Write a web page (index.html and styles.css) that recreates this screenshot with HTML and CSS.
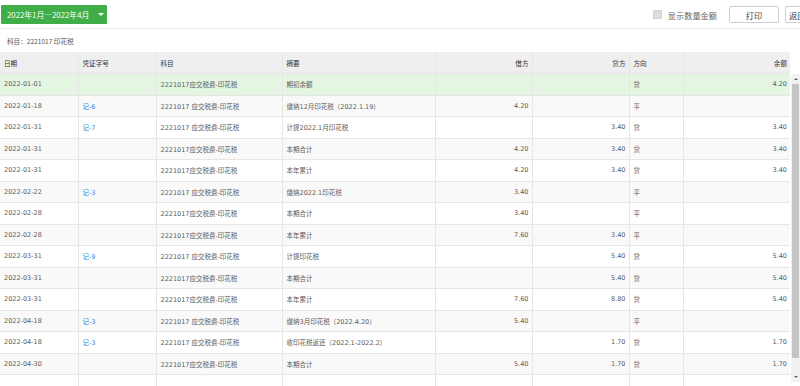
FILE: index.html
```html
<!DOCTYPE html>
<html lang="zh-CN">
<head>
    <meta charset="UTF-8">
    <title>明细账 - 印花税</title>
    <link rel="stylesheet" href="styles.css">
</head>
<body>
    <div id="toolbar">
        <div class="period-btn">2022年1月—2022年4月<span class="caret"></span></div>
        <div class="toolbar-right">
            <label class="check"><span class="check-box"></span>显示数量金额</label>
            <div class="btn">打印</div>
            <div class="btn btn-cut">返回</div>
        </div>
    </div>

    <div id="subject-line">科目：2221017 印花税</div>

    <div id="ledger">
        <table class="ledger-head">
            <colgroup>
                <col class="c-date"><col class="c-no"><col class="c-acct"><col class="c-memo">
                <col class="c-num"><col class="c-num"><col class="c-dir"><col class="c-bal">
            </colgroup>
            <tr>
                <th>日期</th>
                <th>凭证字号</th>
                <th>科目</th>
                <th>摘要</th>
                <th class="num">借方</th>
                <th class="num">贷方</th>
                <th>方向</th>
                <th class="num">余额</th>
            </tr>
        </table>

        <div class="ledger-body">
            <div class="body-scroll">
                <table class="ledger-rows">
                    <colgroup>
                        <col class="c-date"><col class="c-no"><col class="c-acct"><col class="c-memo">
                        <col class="c-num"><col class="c-num"><col class="c-dir"><col class="c-bal">
                    </colgroup>
                    <tr class="opening">
                        <td>2022-01-01</td><td></td><td>2221017应交税费-印花税</td><td>期初余额</td>
                        <td class="num"></td><td class="num"></td><td>贷</td><td class="num">4.20</td>
                    </tr>
                    <tr>
                        <td>2022-01-18</td><td class="voucher">记-6</td><td>2221017 应交税费-印花税</td><td>缴纳12月印花税（2022.1.19）</td>
                        <td class="num">4.20</td><td class="num"></td><td>平</td><td class="num"></td>
                    </tr>
                    <tr>
                        <td>2022-01-31</td><td class="voucher">记-7</td><td>2221017 应交税费-印花税</td><td>计提2022.1月印花税</td>
                        <td class="num"></td><td class="num">3.40</td><td>贷</td><td class="num">3.40</td>
                    </tr>
                    <tr>
                        <td>2022-01-31</td><td></td><td>2221017应交税费-印花税</td><td>本期合计</td>
                        <td class="num">4.20</td><td class="num">3.40</td><td>贷</td><td class="num">3.40</td>
                    </tr>
                    <tr>
                        <td>2022-01-31</td><td></td><td>2221017应交税费-印花税</td><td>本年累计</td>
                        <td class="num">4.20</td><td class="num">3.40</td><td>贷</td><td class="num">3.40</td>
                    </tr>
                    <tr>
                        <td>2022-02-22</td><td class="voucher">记-3</td><td>2221017 应交税费-印花税</td><td>缴纳2022.1印花税</td>
                        <td class="num">3.40</td><td class="num"></td><td>平</td><td class="num"></td>
                    </tr>
                    <tr>
                        <td>2022-02-28</td><td></td><td>2221017应交税费-印花税</td><td>本期合计</td>
                        <td class="num">3.40</td><td class="num"></td><td>平</td><td class="num"></td>
                    </tr>
                    <tr>
                        <td>2022-02-28</td><td></td><td>2221017应交税费-印花税</td><td>本年累计</td>
                        <td class="num">7.60</td><td class="num">3.40</td><td>平</td><td class="num"></td>
                    </tr>
                    <tr>
                        <td>2022-03-31</td><td class="voucher">记-9</td><td>2221017 应交税费-印花税</td><td>计提印花税</td>
                        <td class="num"></td><td class="num">5.40</td><td>贷</td><td class="num">5.40</td>
                    </tr>
                    <tr>
                        <td>2022-03-31</td><td></td><td>2221017应交税费-印花税</td><td>本期合计</td>
                        <td class="num"></td><td class="num">5.40</td><td>贷</td><td class="num">5.40</td>
                    </tr>
                    <tr>
                        <td>2022-03-31</td><td></td><td>2221017应交税费-印花税</td><td>本年累计</td>
                        <td class="num">7.60</td><td class="num">8.80</td><td>贷</td><td class="num">5.40</td>
                    </tr>
                    <tr>
                        <td>2022-04-18</td><td class="voucher">记-3</td><td>2221017 应交税费-印花税</td><td>缴纳3月印花税（2022.4.20）</td>
                        <td class="num">5.40</td><td class="num"></td><td>平</td><td class="num"></td>
                    </tr>
                    <tr>
                        <td>2022-04-18</td><td class="voucher">记-3</td><td>2221017 应交税费-印花税</td><td>收印花税返还（2022.1-2022.2）</td>
                        <td class="num"></td><td class="num">1.70</td><td>贷</td><td class="num">1.70</td>
                    </tr>
                    <tr>
                        <td>2022-04-30</td><td></td><td>2221017应交税费-印花税</td><td>本期合计</td>
                        <td class="num">5.40</td><td class="num">1.70</td><td>贷</td><td class="num">1.70</td>
                    </tr>
                    <tr>
                        <td></td><td></td><td></td><td></td>
                        <td class="num"></td><td class="num"></td><td></td><td class="num"></td>
                    </tr>
                </table>
            </div>
            <div class="scrollbar">
                <span class="arrow-up"></span>
                <div class="thumb"></div>
                <span class="arrow-down"></span>
            </div>
        </div>
    </div>
</body>
</html>
```

FILE: styles.css
```css
html, body {
    margin: 0;
    height: 100%;
    overflow: hidden;
}

body {
    background: #ffffff;
    color: #555555;
    font-family: "Noto Sans CJK SC", sans-serif;
}

#toolbar {
    height: 29px;
    box-sizing: border-box;
    border-bottom: 1px solid #ececec;
    display: flex;
    justify-content: space-between;
    align-items: flex-start;
    padding: 5px 0 0 1px;
    font-size: 8.2px;
}

.period-btn {
    background: #3fae48;
    color: #ffffff;
    height: 19px;
    width: 106px;
    box-sizing: border-box;
    padding-left: 6px;
    display: flex;
    align-items: center;
    white-space: nowrap;
    font-size: 7.8px;
    border-radius: 1px;
}

.caret {
    margin-left: 9px;
    border-left: 3px solid transparent;
    border-right: 3px solid transparent;
    border-top: 3.5px solid #ffffff;
}

.toolbar-right {
    display: flex;
    align-items: center;
    gap: 6px;
    padding-top: 1px;
}

.check {
    display: flex;
    align-items: center;
    gap: 6px;
    color: #666666;
    margin-right: 6px;
    white-space: nowrap;
}

.check-box {
    width: 7px;
    height: 7px;
    background: #dcdcdc;
    border: 1px solid #d2d2d2;
}

.btn {
    width: 50px;
    height: 17px;
    box-sizing: border-box;
    border: 1px solid #cfcfcf;
    border-radius: 2px;
    background: #ffffff;
    color: #444444;
    display: flex;
    align-items: center;
    justify-content: center;
    flex-shrink: 0;
    white-space: nowrap;
}

.btn-cut {
    width: 15px;
    justify-content: flex-start;
    padding-left: 3px;
    border-right: none;
    border-radius: 2px 0 0 2px;
    overflow: hidden;
}

#subject-line {
    height: 23px;
    line-height: 25px;
    padding-left: 7px;
    font-size: 6.6px;
    color: #555555;
}

table {
    border-collapse: collapse;
    table-layout: fixed;
    width: 790px;
    font-family: "DejaVu Sans", "Noto Sans CJK SC", sans-serif;
    font-size: 6.5px;
}

col.c-date { width: 78px; }
col.c-no { width: 78px; }
col.c-acct { width: 126px; }
col.c-memo { width: 153px; }
col.c-num { width: 97px; }
col.c-dir { width: 54px; }
col.c-bal { width: 107px; }

th, td {
    text-align: left;
    white-space: nowrap;
    overflow: hidden;
    padding: 0 3px 0 4px;
    border: 1px solid #e6e6e6;
    border-top: none;
}

th:first-child, td:first-child {
    border-left: none;
}

th:last-child, td:last-child {
    border-right: none;
}

th {
    background: #efefef;
    font-weight: normal;
    color: #333333;
    height: 21px;
    font-family: "Noto Sans CJK SC", sans-serif;
    font-size: 6.6px;
}

td {
    height: 20.5px;
    color: #5a5a5a;
}

.num {
    text-align: right;
}

.ledger-rows tr:nth-child(even) td {
    background: #f9f9f9;
}

.ledger-rows tr.opening td {
    background: #e4f6e2;
}

.voucher {
    color: #3b82d6;
}

.ledger-body {
    display: flex;
    height: 313px;
}

.body-scroll {
    width: 790px;
    overflow: hidden;
}

.scrollbar {
    width: 9px;
    margin-left: 1px;
    height: 308px;
    background: #f1f1f1;
    display: flex;
    flex-direction: column;
    align-items: center;
}

.arrow-up, .arrow-down {
    height: 10px;
    display: flex;
    align-items: center;
}

.arrow-up::before {
    content: "";
    border-left: 2px solid transparent;
    border-right: 2px solid transparent;
    border-bottom: 2.5px solid #606060;
}

.arrow-down::before {
    content: "";
    border-left: 2px solid transparent;
    border-right: 2px solid transparent;
    border-top: 2.5px solid #606060;
}

.thumb {
    flex: 1;
    width: 7px;
    background: #c4c4c4;
    margin: 0 0 14px;
}
```
